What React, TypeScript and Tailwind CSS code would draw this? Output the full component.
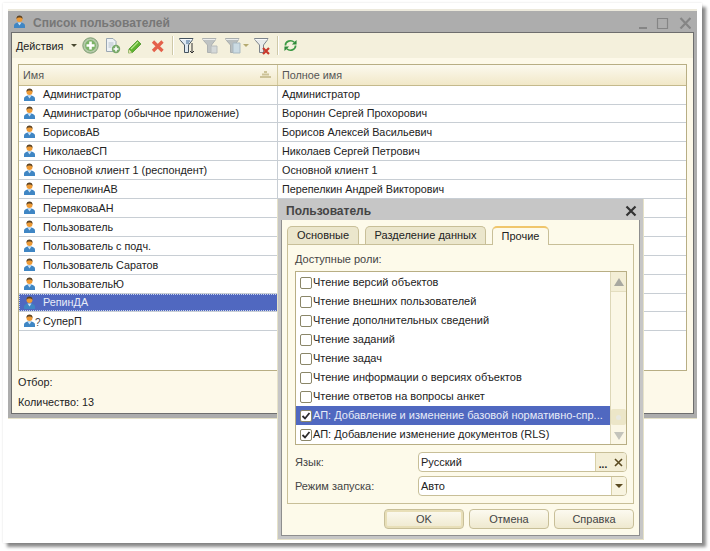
import type { ReactNode } from "react"

const users = [
  { name: "Администратор", full: "Администратор" },
  { name: "Администратор (обычное приложение)", full: "Воронин Сергей Прохорович" },
  { name: "БорисовАВ", full: "Борисов Алексей Васильевич" },
  { name: "НиколаевСП", full: "Николаев Сергей Петрович" },
  { name: "Основной клиент 1 (респондент)", full: "Основной клиент 1" },
  { name: "ПерепелкинАВ", full: "Перепелкин Андрей Викторович" },
  { name: "ПермяковаАН", full: "" },
  { name: "Пользователь", full: "" },
  { name: "Пользователь с подч.", full: "" },
  { name: "Пользователь Саратов", full: "" },
  { name: "ПользовательЮ", full: "" },
  { name: "РепинДА", full: "", selected: true },
  { name: "СуперП", full: "", unknown: true },
]

const roles = [
  { label: "Чтение версий объектов" },
  { label: "Чтение внешних пользователей" },
  { label: "Чтение дополнительных сведений" },
  { label: "Чтение заданий" },
  { label: "Чтение задач" },
  { label: "Чтение информации о версиях объектов" },
  { label: "Чтение ответов на вопросы анкет" },
  { label: "АП: Добавление и изменение базовой нормативно-спр...", checked: true, selected: true },
  { label: "АП: Добавление изменение документов (RLS)", checked: true },
]

function UserIcon({ unknown }: { unknown?: boolean }) {
  return (
    <span className="flex h-[14px] w-[19px] shrink-0 items-end">
      <svg width="11" height="14" viewBox="0 0 11 14" className="shrink-0">
        <path d="M0 13v-2.500C0 9 1.500 8 3.500 7.500h4C9.500 8 11 9 11 10.500V13z" fill="#3f86c4" />
        <path d="M3.500 7.500h4L5.500 10.500z" fill="#cfe3f3" />
        <circle cx="5.500" cy="4" r="3" fill="#ee9a35" />
        <path d="M2.500 4C2.200 1.500 3.800.5 5.500.5S8.800 1.500 8.500 4C7.700 2.800 6.800 2.500 5.500 2.500S3.300 2.800 2.500 4z" fill="#5a4326" />
      </svg>
      {unknown && <span className="text-[10px] leading-[11px] text-[#444]">?</span>}
    </span>
  )
}

function PlusCircle() {
  return (
    <svg width="17" height="17" viewBox="0 0 17 17">
      <circle cx="8.500" cy="8.500" r="7.700" fill="#b3c9a8" stroke="#7d9c72" />
      <circle cx="8.500" cy="8.500" r="5.400" fill="#7cb368" />
      <path d="M8.500 4.500v8M4.500 8.500h8" stroke="#fff" strokeWidth="2.600" />
    </svg>
  )
}

function DocPlus() {
  return (
    <svg width="17" height="17" viewBox="0 0 17 17">
      <path d="M2.500 1.500h6.500l3 3v10h-9.500z" fill="#eef2f5" stroke="#9aa7b2" />
      <path d="M4.500 6h5M4.500 8h5M4.500 10h3" stroke="#b4c0ca" />
      <circle cx="12" cy="12" r="4.200" fill="#79a96a" />
      <path d="M12 9.500v5M9.500 12h5" stroke="#fff" strokeWidth="1.600" />
    </svg>
  )
}

function Pencil() {
  return (
    <svg width="16" height="16" viewBox="0 0 16 16">
      <path d="M2 11 10.500 2.500l3.500 3.500L5.500 14.500l-4 .5z" fill="#5fb32f" stroke="#3e8a1e" strokeWidth=".7" />
      <path d="M4 11 11 4" stroke="#b6e68c" strokeWidth="1.200" />
      <path d="M2 11.500 1.500 15l3.500-.5z" fill="#e8e0b0" />
    </svg>
  )
}

function RedX() {
  return (
    <svg width="14" height="14" viewBox="0 0 14 14">
      <path d="M2 2.500 11.500 12M11.500 2.500 2 12" stroke="#e4604a" strokeWidth="3.200" />
    </svg>
  )
}

function Funnel({ fill, stroke, children }: { fill: string; stroke: string; children?: ReactNode }) {
  return (
    <svg width="19" height="18" viewBox="0 0 19 18">
      <path d="M1.500 1.500h13.500l-1 2L10.500 8v7.500h-4V8L2.500 3.500z" fill={fill} stroke={stroke} />
      <path d="M2 2.500h12.500" stroke="#fff" strokeOpacity=".7" />
      {children}
    </svg>
  )
}

function Refresh() {
  return (
    <svg width="15" height="13" viewBox="0 0 16 14" fill="none">
      <path d="M2.500 7a5.500 5 0 0 1 9.500-3.500" stroke="#3d9a45" strokeWidth="1.800" />
      <path d="M13.500 7A5.500 5 0 0 1 4 10.500" stroke="#3d9a45" strokeWidth="1.800" />
      <path d="M14.500 1V6H9.500z" fill="#2c8a38" />
      <path d="M1.500 13V8h5z" fill="#2c8a38" />
    </svg>
  )
}

function Caret({ color = "#4a4a32" }: { color?: string }) {
  return <span className="block h-0 w-0 shrink-0 border-x-[3px] border-t-[3px] border-x-transparent" style={{ borderTopColor: color }} />
}

function ToolSeparator({ className }: { className: string }) {
  return <div className={`h-[19px] w-[2px] border-l border-r border-l-[#cfc9a8] border-r-white ${className}`} />
}

function Toolbar() {
  return (
    <div className="flex h-[25px] items-center bg-[#f4f0dc] pl-[4px]">
      <span className="w-[55px]">Действия</span>
      <Caret />
      <div className="ml-[1px] flex w-[24px] justify-center"><PlusCircle /></div>
      <div className="flex w-[21px] justify-center"><DocPlus /></div>
      <div className="flex w-[24px] justify-center"><Pencil /></div>
      <div className="flex w-[22px] justify-center"><RedX /></div>
      <ToolSeparator className="ml-[3px]" />
      <div className="ml-[3px] flex w-[20px] justify-center">
        <Funnel fill="#dfe9f1" stroke="#44525e">
          <path d="M8 4h4M8 6h3" stroke="#3f6a94" />
          <path d="M14 6v10M12 14l2 2 2-2" stroke="#333" fill="none" />
        </Funnel>
      </div>
      <div className="ml-[3px] flex w-[20px] justify-center">
        <Funnel fill="#bfc3c3" stroke="#adb1b1">
          <path d="M10 9h6v7h-6z" fill="#d5d9d9" stroke="#b8bcbc" />
        </Funnel>
      </div>
      <div className="ml-[3px] flex w-[20px] justify-center">
        <Funnel fill="#b9bebe" stroke="#a8adad">
          <path d="M9 6h7v10H9z" fill="#cbdbe3" stroke="#a9b9c2" />
        </Funnel>
      </div>
      <Caret color="#b5aa70" />
      <div className="ml-[3px] flex w-[20px] justify-center">
        <Funnel fill="#e8eaea" stroke="#7d848c">
          <path d="M10 11l6 6M16 11l-6 6" stroke="#c8382c" strokeWidth="2.200" />
        </Funnel>
      </div>
      <ToolSeparator className="ml-[5px]" />
      <div className="ml-[2px] flex w-[18px] justify-center"><Refresh /></div>
    </div>
  )
}

function UsersTable() {
  return (
    <div className="mx-[6px] mt-[6px] h-[307px] border border-[#b8ae84] bg-white">
      <div className="flex h-[20.500px] border-b border-[#c4b98c] bg-gradient-to-b from-[#fbf9ee] to-[#f1e8c8] text-[#555]">
        <div className="flex w-[259px] items-center justify-between border-r border-[#d3ca9f] pl-[4px] pr-[6px]">
          <span>Имя</span>
          <svg width="11" height="7" viewBox="0 0 11 7">
            <path d="M4 0h3v2H4zM2 2.500h7v2H2zM0 5h11v2H0z" fill="#cdc398" />
          </svg>
        </div>
        <div className="flex flex-1 items-center pl-[4px]">Полное имя</div>
      </div>
      {users.map((u) => (
        <div key={u.name} className="flex h-[18.920px] border-b border-[#c8ced4]">
          <div
            className={`flex w-[259px] items-center ${
              u.selected
                ? "border border-dotted border-[#c9d2ee] bg-[#5068c0] pl-[4px] text-[#e8ecf8]"
                : "border-r border-[#c8ced4] pl-[5px]"
            }`}
          >
            <UserIcon unknown={u.unknown} />
            <span>{u.name}</span>
          </div>
          <div className="flex flex-1 items-center pl-[4px]">{u.full}</div>
        </div>
      ))}
    </div>
  )
}

function MainWindow() {
  return (
    <div className="ml-[5px] mt-[6px] flex h-[410px] w-[689px] flex-col border-t-2 border-b border-t-[#ece9dc] border-b-[#e6e2c8] bg-[#adadad] px-[3px] pb-[4px] text-[10.800px]">
      <div className="flex h-[21px] shrink-0 items-center pl-[3px] pr-[3px]">
        <UserIcon />
        <span className="mt-[2px] flex-1 text-[12px] font-bold text-[#777]">Список пользователей</span>
        <svg width="54" height="14" viewBox="0 0 54 14" fill="none" stroke="#858585">
          <path d="M2 13h8" strokeWidth="2" />
          <path d="M20.500 3.500h10v10h-10z" strokeWidth="1.200" />
          <path d="M43.500 3 53.500 13.500M53.500 3 43.500 13.500" strokeWidth="2.200" />
        </svg>
      </div>
      <div className="flex flex-1 flex-col border border-[#6e6e6e] bg-[#fdf9e9]">
        <Toolbar />
        <UsersTable />
        <div className="mx-[6px] mt-[4px] leading-[14px]">Отбор:</div>
        <div className="mx-[6px] mt-[6px] leading-[14px]">Количество: 13</div>
      </div>
    </div>
  )
}

function RoleCheckbox({ checked }: { checked?: boolean }) {
  return (
    <span className="flex h-[12px] w-[12px] shrink-0 items-center justify-center rounded-[2px] border border-[#8a8668] bg-white">
      {checked && (
        <svg width="10" height="10" viewBox="0 0 10 10" fill="none">
          <path d="M1.500 5 4 7.500 8.500 2" stroke="#2b2b2b" strokeWidth="1.800" />
        </svg>
      )}
    </span>
  )
}

function RolesList() {
  return (
    <div className="ml-[7px] mr-[6px] flex h-[174px] border border-[#b8ae84] bg-white">
      <div className="w-[314px] pt-[1px]">
        {roles.map((r) => (
          <div
            key={r.label}
            className={`flex h-[19px] items-center whitespace-nowrap pl-[4px] ${
              r.selected ? "bg-[#5068c0] text-[#e8ecf8]" : ""
            }`}
          >
            <RoleCheckbox checked={r.checked} />
            <span className="ml-[1px]">{r.label}</span>
          </div>
        ))}
      </div>
      <div className="flex flex-1 flex-col items-center border-l border-[#ddd7b8] bg-[#fbf7e6]">
        <div className="flex h-[20px] w-full items-center justify-center border-b border-[#e4dec0] bg-[#f3eed6]">
          <span className="h-0 w-0 border-x-[5px] border-b-[8px] border-x-transparent border-b-[#a8a8a0]" />
        </div>
        <div className="mt-[117px] flex h-[16px] w-full items-center justify-center rounded-[2px] bg-[#ece6c8]">
          <span className="h-[5px] w-[5px] rounded-full bg-[#e8e8e0]" />
        </div>
        <span className="mt-[7px] h-0 w-0 border-x-[5px] border-t-[8px] border-x-transparent border-t-[#c4c4bc]" />
      </div>
    </div>
  )
}

function Tab({ label, width, active }: { label: string; width: string; active?: boolean }) {
  return (
    <div
      className={`flex items-center justify-center rounded-t-[5px] border border-b-0 border-[#c8bf98] ${width} ${
        active ? "relative z-10 mb-[-1px] h-[19px] border-t-2 border-t-[#f0c66c] bg-[#fdfaea]" : "h-[18px] bg-[#ebe6cc]"
      }`}
    >
      {label}
    </div>
  )
}

function Field({ label, value, children }: { label: string; value: string; children: ReactNode }) {
  return (
    <div className="flex h-[20px] items-center pl-[7px] pr-[6px]">
      <span className="w-[123px] text-[#444]">{label}</span>
      <div className="flex h-[20px] flex-1 items-stretch overflow-hidden rounded-[4px] border border-[#c8bf98] bg-white">
        <span className="flex flex-1 items-center pl-[2px]">{value}</span>
        {children}
      </div>
    </div>
  )
}

function DialogButton({ label, primary }: { label: string; primary?: boolean }) {
  return (
    <div
      className={`flex h-[20px] w-[80px] items-center justify-center rounded-[4px] border border-[#c8bf98] bg-gradient-to-b from-[#fcfaf0] to-[#efe9cf] text-[#444] ${
        primary ? "shadow-[inset_0_0_0_2px_#e8dfb8]" : ""
      }`}
    >
      {label}
    </div>
  )
}

function UserDialog() {
  return (
    <div className="absolute left-[274px] top-[196px] flex h-[341px] w-[367px] flex-col border-b border-l border-r border-[#e6e2c8] bg-[#c6c6c6] px-[3px] pb-[3px]">
      <div className="flex h-[21px] shrink-0 items-center justify-between pl-[5px] pr-[3px] pt-[2px]">
        <span className="text-[12px] font-bold text-[#444]">Пользователь</span>
        <svg width="12" height="12" viewBox="0 0 12 12">
          <path d="M1.500 1.500 10.500 10.500M10.500 1.500 1.500 10.500" stroke="#333" strokeWidth="2.200" />
        </svg>
      </div>
      <div className="flex flex-1 flex-col border border-t-0 border-[#8e8e8e] bg-[#fdfaea] px-[5px] pt-[6px]">
        <div className="flex items-end gap-[6px]">
          <Tab label="Основные" width="w-[72px]" />
          <Tab label="Разделение данных" width="w-[121px]" />
          <Tab label="Прочие" width="w-[57px]" active />
        </div>
        <div className="h-[260px] border border-[#c8bf98]">
          <div className="flex h-[26px] items-center px-[7px] pt-[3px] text-[#444]">Доступные роли:</div>
          <RolesList />
          <div className="mt-[7px] flex flex-col gap-[4px]">
            <Field label="Язык:" value="Русский">
              <span className="flex w-[15px] items-end justify-center border-l border-[#d8d0a8] bg-[#f3eed6] pb-[3px] text-[10px] font-bold leading-[6px]">...</span>
              <span className="flex w-[16px] items-center justify-center bg-[#f3eed6]">
                <svg width="9" height="9" viewBox="0 0 9 9">
                  <path d="M1 1l7 7M8 1 1 8" stroke="#5a4a20" strokeWidth="1.600" />
                </svg>
              </span>
            </Field>
            <Field label="Режим запуска:" value="Авто">
              <span className="flex w-[15px] items-center justify-center border-l border-[#d8d0a8] bg-[#f8f4e0]">
                <span className="h-0 w-0 border-x-[4px] border-t-[4px] border-x-transparent border-t-[#5a4a20]" />
              </span>
            </Field>
          </div>
        </div>
        <div className="mt-[5px] flex justify-end gap-[5px]">
          <DialogButton label="OK" primary />
          <DialogButton label="Отмена" />
          <DialogButton label="Справка" />
        </div>
      </div>
    </div>
  )
}

export default function App() {
  return (
    <div className="h-[551px] w-[710px] overflow-hidden bg-white pl-[3px] pt-[3px] font-['Liberation_Sans',sans-serif] text-[11px] text-[#222]">
      <div className="relative h-[540px] w-[699px] bg-white pt-[0.1px] shadow-[4px_4px_3px_rgba(0,0,0,0.45),0_0_2px_rgba(0,0,0,0.12)]">
        <MainWindow />
        <UserDialog />
      </div>
    </div>
  )
}
